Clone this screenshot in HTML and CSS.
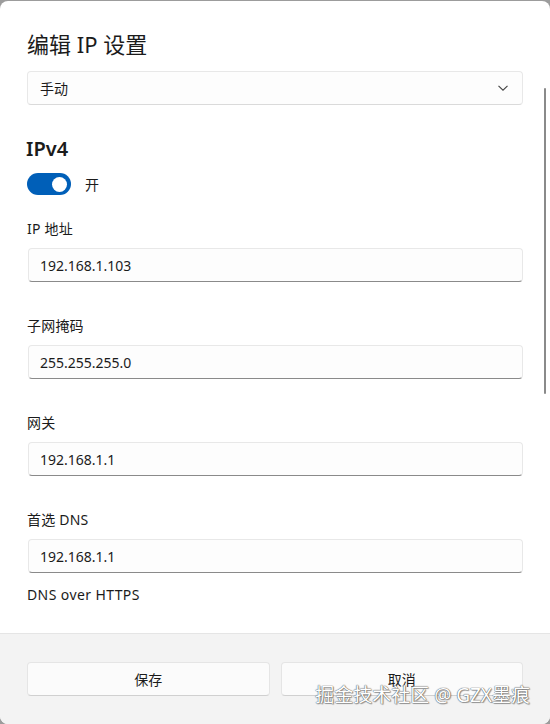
FILE: index.html
```html
<!DOCTYPE html>
<html lang="zh-CN">
<head>
<meta charset="utf-8">
<title>编辑 IP 设置</title>
<link rel="stylesheet" href="styles.css">
</head>
<body>
<div class="dialog">
  <div class="content">
    <h1 class="title">编辑 IP 设置</h1>
    <div class="select">
      <span>手动</span>
      <svg class="chev" width="12" height="8" viewBox="0 0 12 8"><path d="M1.5 1.8 L6 6.2 L10.5 1.8" fill="none" stroke="#444" stroke-width="1.1"/></svg>
    </div>
    <h2 class="section">IPv4</h2>
    <div class="toggle-row">
      <div class="toggle"><div class="knob"></div></div>
      <span class="toggle-label">开</span>
    </div>
    <div class="field first">
      <div class="label">IP 地址</div>
      <div class="input">192.168.1.103</div>
    </div>
    <div class="field">
      <div class="label">子网掩码</div>
      <div class="input">255.255.255.0</div>
    </div>
    <div class="field">
      <div class="label">网关</div>
      <div class="input">192.168.1.1</div>
    </div>
    <div class="field">
      <div class="label">首选 DNS</div>
      <div class="input">192.168.1.1</div>
    </div>
    <div class="doh">DNS over HTTPS</div>
    <div class="scrollbar"></div>
  </div>
  <div class="footer">
    <button class="btn">保存</button>
    <button class="btn">取消</button>
  </div>
  <div class="watermark">掘金技术社区 @ GZX墨痕</div>
</div>
</body>
</html>
```
FILE: styles.css
```css
* { box-sizing: border-box; }
html, body { margin: 0; padding: 0; }
body {
  background: #9c9c9c;
  width: 550px;
  height: 724px;
  overflow: hidden;
  font-family: "Noto Sans", "Noto Sans CJK SC", sans-serif;
  color: #1b1b1b;
}
.dialog {
  position: relative;
  margin-top: 1px;
  height: 723px;
  background: #ffffff;
  border-radius: 8px;
  overflow: hidden;
  display: flex;
  flex-direction: column;
}
.content {
  position: relative;
  flex: 1;
  padding: 29px 27px 0 27px;
  overflow: hidden;
}
.title {
  margin: 0;
  font-size: 22px;
  font-weight: 400;
  line-height: 28px;
}
.select {
  margin-top: 13px;
  height: 34px;
  border: 1px solid #e8e8e8;
  border-bottom-color: #dadada;
  border-radius: 4px;
  background: #fdfdfd;
  display: flex;
  align-items: center;
  justify-content: space-between;
  padding: 0 13px 0 12px;
  font-size: 14px;
}
.chev { display: block; }
.section {
  margin: 30px 0 0 -1px;
  font-size: 20px;
  font-weight: 600;
  line-height: 28px;
}
.toggle-row {
  margin-top: 10px;
  display: flex;
  align-items: center;
  height: 22px;
}
.toggle {
  width: 44px;
  height: 22px;
  border-radius: 11px;
  background: #005fb8;
  display: flex;
  align-items: center;
  justify-content: flex-end;
  padding-right: 4px;
}
.knob {
  width: 15px;
  height: 15px;
  border-radius: 50%;
  background: #fff;
}
.toggle-label {
  margin-left: 14px;
  font-size: 14px;
}
.field { margin-top: 34px; }
.field.first { margin-top: 24px; }
.label {
  font-size: 14px;
  line-height: 20px;
  margin-bottom: 9px;
  letter-spacing: 0.2px;
}
.input {
  height: 34px;
  margin-left: 1px;
  border: 1px solid #e8e8e8;
  border-bottom: 1px solid #8a8a8a;
  border-radius: 4px;
  background: #fdfdfd;
  display: flex;
  align-items: center;
  padding-left: 11px;
  font-size: 14px;
}
.doh {
  margin-top: 12px;
  font-size: 14px;
  line-height: 20px;
  letter-spacing: 0.4px;
}
.scrollbar {
  position: absolute;
  right: 4px;
  top: 87px;
  width: 2px;
  height: 306px;
  border-radius: 1px;
  background: #8a8a8a;
}
.footer {
  height: 91px;
  flex: none;
  background: #f3f3f3;
  border-top: 1px solid #e5e5e5;
  display: flex;
  gap: 11px;
  padding: 28px 27px 0 27px;
}
.btn {
  flex: 1;
  height: 34px;
  border: 1px solid #e5e5e5;
  border-bottom-color: #d0d0d0;
  border-radius: 4px;
  background: #fbfbfb;
  font-family: inherit;
  font-size: 14px;
  color: #1b1b1b;
  padding: 0;
}
.watermark {
  position: absolute;
  right: 20px;
  bottom: 17px;
  font-size: 19px;
  line-height: 24px;
  color: #ffffff;
  text-shadow: 0 0 1px #555, 0 0 1px #555, 1px 1px 1px rgba(0,0,0,0.35);
  white-space: nowrap;
}
```
